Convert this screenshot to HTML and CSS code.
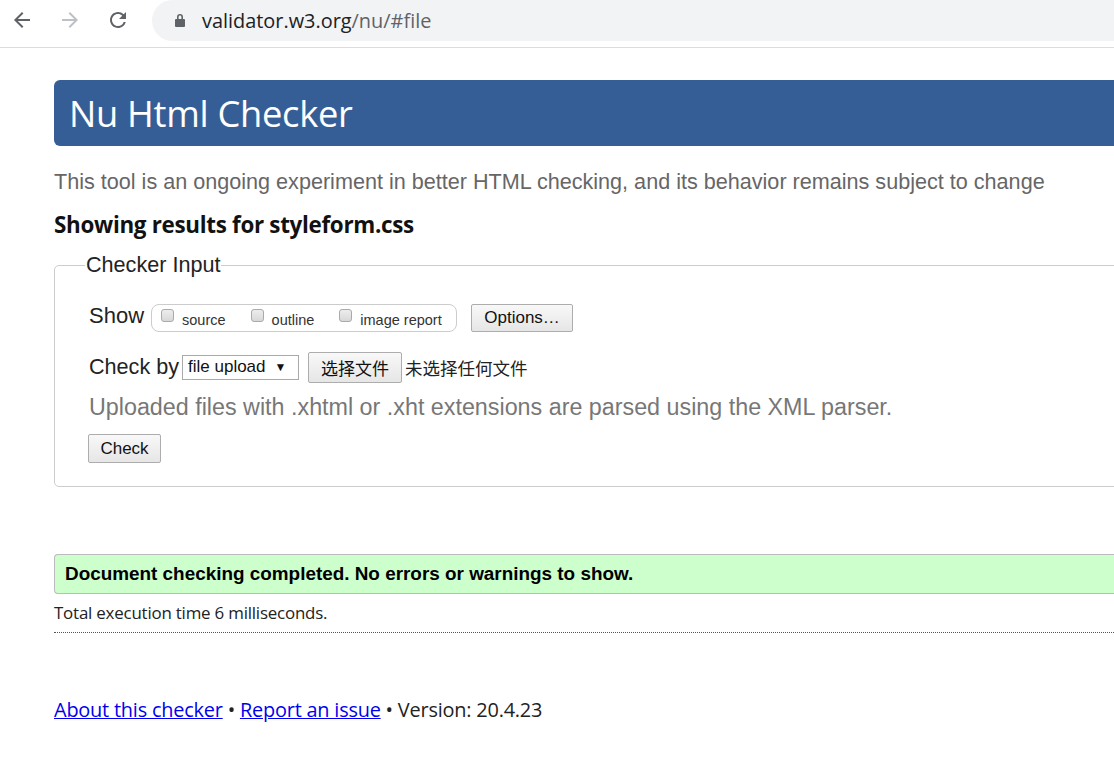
FILE: index.html
```html
<!DOCTYPE html>
<html lang="en">
<head>
<meta charset="utf-8">
<title>Nu Html Checker</title>
<link rel="stylesheet" href="styles.css">
</head>
<body>
<div class="toolbar">
  <div class="nav">
    <svg class="navicon" width="24" height="24" viewBox="0 0 24 24"><path d="M20 11H7.83l5.59-5.59L12 4l-8 8 8 8 1.41-1.41L7.83 13H20v-2z" fill="#5f6368"/></svg>
    <svg class="navicon" width="24" height="24" viewBox="0 0 24 24"><path d="M4 11h12.17l-5.59-5.59L12 4l8 8-8 8-1.41-1.41L16.17 13H4v-2z" fill="#bdc1c6"/></svg>
    <svg class="navicon" width="24" height="24" viewBox="0 0 24 24"><path d="M17.65 6.35A7.958 7.958 0 0 0 12 4c-4.42 0-7.99 3.58-7.99 8s3.57 8 7.99 8c3.73 0 6.84-2.55 7.73-6h-2.08A5.99 5.99 0 0 1 12 18c-3.31 0-6-2.69-6-6s2.69-6 6-6c1.66 0 3.14.69 4.22 1.78L13 11h7V4l-2.35 2.35z" fill="#5f6368"/></svg>
  </div>
  <div class="omnibox">
    <svg class="lock" width="12" height="14" viewBox="0 0 12 14"><path d="M3 6V4a3 3 0 0 1 6 0v2h-1.6V4a1.4 1.4 0 0 0-2.8 0v2z" fill="#5f6368"/><rect x="1" y="6" width="10" height="8" rx="1" fill="#5f6368"/></svg>
    <span class="url"><span class="host">validator.w3.org</span>/nu/#file</span>
  </div>
</div>
<div class="page">
  <h1 class="title">Nu Html Checker</h1>
  <p class="tagline">This tool is an ongoing experiment in better HTML checking, and its behavior remains subject to change</p>
  <h2 class="results">Showing results for styleform.css</h2>
  <fieldset class="input">
    <legend class="legend">Checker Input</legend>
    <div class="row show-row">
      <span class="label-big">Show</span>
      <span class="opts">
        <label class="opt"><span class="cb"></span>source</label>
        <label class="opt"><span class="cb"></span>outline</label>
        <label class="opt"><span class="cb"></span>image report</label>
      </span>
      <span class="btn options">Options…</span>
    </div>
    <div class="row check-row">
      <span class="label-big">Check by</span>
      <span class="select">file upload <span class="caret">▼</span></span>
      <span class="btn file">选择文件</span>
      <span class="nofile">未选择任何文件</span>
    </div>
    <p class="note">Uploaded files with .xhtml or .xht extensions are parsed using the XML parser.</p>
    <span class="btn check">Check</span>
  </fieldset>
  <div class="success">Document checking completed. No errors or warnings to show.</div>
  <p class="time">Total execution time 6 milliseconds.</p>
  <p class="footer"><a href="#">About this checker</a> • <a href="#">Report an issue</a> • Version: 20.4.23</p>
</div>
</body>
</html>
```

FILE: styles.css
```css
html, body {
  margin: 0;
  padding: 0;
  background: #fff;
  overflow: hidden;
}
body {
  width: 1114px;
  height: 784px;
  font-family: "Lato", "Noto Sans CJK SC", sans-serif;
  color: #222;
}
.toolbar {
  height: 48px;
  box-sizing: border-box;
  border-bottom: 1px solid #dadce0;
  display: flex;
  align-items: flex-start;
}
.nav {
  display: flex;
  gap: 24px;
  padding: 8px 0 0 10px;
  width: 142px;
  box-sizing: border-box;
}
.navicon { display: block; }
.omnibox {
  flex: 1;
  margin-left: 10px;
  height: 41px;
  background: #f1f3f4;
  border-radius: 21px 0 0 21px;
  display: flex;
  align-items: center;
  padding-left: 22px;
  gap: 16px;
}
.lock { display: block; margin-top: -2px; }
.url {
  font-family: "Open Sans", "Noto Sans", sans-serif;
  font-size: 19.9px;
  color: #5f6368;
  margin-top: -1px;
}
.host { color: #202124; }
.page {
  width: 1200px;
  padding: 32px 0 0 54px;
}
.title {
  margin: 0;
  height: 66px;
  box-sizing: border-box;
  background: #365e96;
  color: #fff;
  border-radius: 6px 0 0 6px;
  font-family: "Open Sans", sans-serif;
  font-weight: 400;
  font-size: 36.3px;
  line-height: 66px;
  padding-left: 15px;
  letter-spacing: -0.3px;
}
.tagline {
  margin: 24px 0 0;
  font-family: "Liberation Sans", Arial, sans-serif;
  font-size: 21.6px;
  color: #666;
  line-height: 24px;
}
.results {
  margin: 18px 0 0;
  font-family: "Open Sans", sans-serif;
  font-size: 22.4px;
  font-weight: 700;
  color: #111;
  line-height: 26px;
  letter-spacing: -0.3px;
}
.input {
  margin: 17px 0 0;
  padding: 26px 0 23px 34px;
  border: 1px solid #ccc;
  border-radius: 5px 0 0 5px;
  font-family: "Liberation Sans", Arial, sans-serif;
  min-width: 0;
}
.legend {
  font-size: 21.6px;
  color: #222;
  padding: 0 1px;
  margin-left: -4px;
  line-height: 20px;
}
.row {
  display: flex;
  align-items: center;
}
.label-big {
  font-size: 22px;
  color: #222;
}
.show-row { height: 30px; }
.opts {
  margin-left: 7px;
  height: 28px;
  width: 306px;
  border: 1px solid #ccc;
  border-radius: 8px;
  display: flex;
  align-items: center;
  padding-left: 9px;
  gap: 25px;
  box-sizing: border-box;
  margin-top: 4px;
}
.opt {
  font-size: 14.5px;
  color: #333;
  display: flex;
  align-items: center;
  gap: 8px;
  padding-top: 4px;
}
.cb {
  width: 13px;
  height: 13px;
  border: 1px solid #aaa;
  border-radius: 3px;
  background: linear-gradient(#ededed, #d8d8d8);
  box-sizing: border-box;
  margin-top: -9px;
}
.btn {
  display: inline-flex;
  align-items: center;
  justify-content: center;
  box-sizing: border-box;
  border: 1px solid #adadad;
  border-radius: 2px;
  background: linear-gradient(#f8f8f8, #e6e6e6);
  color: #111;
  font-family: "Liberation Sans", Arial, sans-serif;
}
.options {
  margin-left: 14px;
  width: 102px;
  height: 28px;
  font-size: 17px;
  margin-top: 4px;
}
.check-row { margin-top: 21px; height: 30px; }
.check-row .label-big { font-size: 21.6px; }
.select {
  margin-left: 3px;
  width: 117px;
  height: 25px;
  border: 1px solid #a9a9a9;
  box-sizing: border-box;
  font-size: 17px;
  display: inline-flex;
  align-items: center;
  padding-left: 5px;
  color: #111;
}
.caret { font-size: 12px; margin-left: 9px; }
.file {
  margin-left: 9px;
  width: 94px;
  height: 31px;
  font-family: "Noto Sans CJK SC", sans-serif;
  font-size: 17px;
}
.nofile {
  font-family: "Noto Sans CJK SC", sans-serif;
  font-size: 17.5px;
  margin-left: 3px;
  color: #222;
}
.note {
  margin: 12px 0 0;
  font-size: 23.3px;
  color: #777;
  line-height: 26px;
  font-family: "Liberation Sans", Arial, sans-serif;
}
.check {
  margin-top: 14px;
  width: 73px;
  height: 29px;
  font-size: 17px;
  margin-left: -1px;
}
.success {
  margin-top: 67px;
  height: 40px;
  box-sizing: border-box;
  border: 1px solid #bbb;
  border-right: none;
  border-radius: 4px 0 0 4px;
  background: #ccffcc;
  font-family: "Liberation Sans", Arial, sans-serif;
  font-weight: 700;
  font-size: 18.9px;
  color: #000;
  line-height: 38px;
  padding-left: 10px;
}
.time {
  margin: 8px 0 0;
  font-family: "Open Sans", sans-serif;
  font-size: 16.9px;
  color: #222;
  line-height: 22px;
  padding-bottom: 8px;
  border-bottom: 1px dotted #555;
  letter-spacing: -0.2px;
}
.footer {
  margin: 64px 0 0;
  font-family: "Open Sans", sans-serif;
  font-size: 19.9px;
  color: #222;
  line-height: 26px;
  letter-spacing: -0.2px;
}
.footer a { color: #0000ee; }
```
